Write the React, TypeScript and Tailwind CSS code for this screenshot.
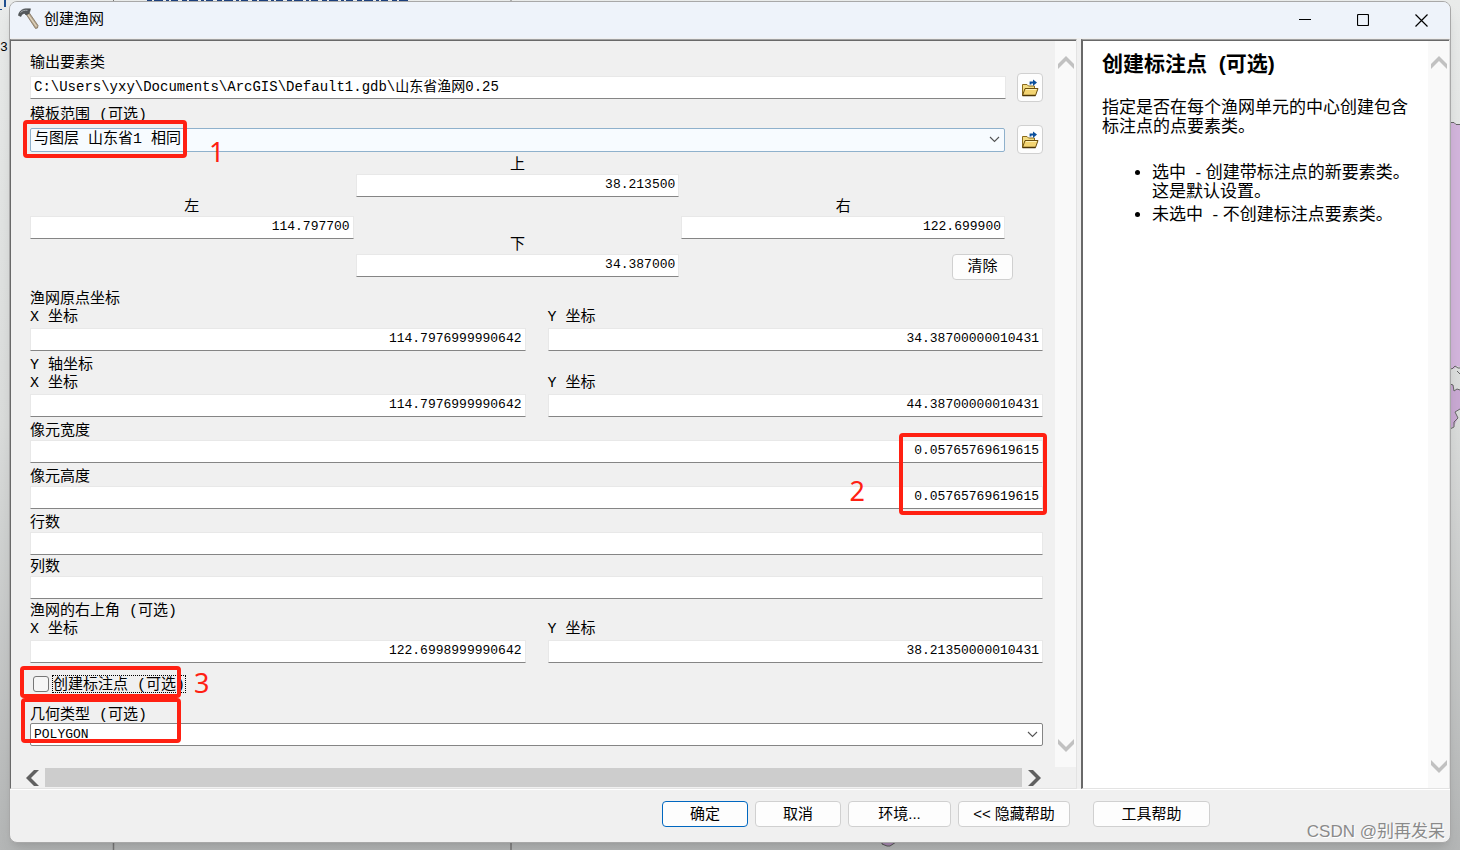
import { useState } from "react";

const mono = "font-['Liberation_Mono','Noto_Sans_CJK_SC',monospace]";

const fieldBase =
  "block h-[23px] w-full min-w-0 border border-[#e8e8e8] border-b-[#858585] bg-white px-[3px] text-black outline-none";

const numberText = "pb-[2px] text-right text-[13px] leading-[18px]";

const labelBase = "block pt-1 leading-[14px]";

function NumberField({ id, label, value = "", gap = "mt-px" }: { id: string; label: string; value?: string; gap?: string }) {
  return (
    <div>
      <label htmlFor={id} className={labelBase}>{label}</label>
      <input id={id} defaultValue={value} className={`${fieldBase} ${gap} ${numberText}`} />
    </div>
  );
}

function ExtentField({ id, label, value }: { id: string; label: string; value: string }) {
  return (
    <div>
      <label htmlFor={id} className={`${labelBase} text-center`}>{label}</label>
      <input id={id} defaultValue={value} className={`${fieldBase} ${numberText} mt-px`} />
    </div>
  );
}

function PointFields({ id, title, x, y }: { id: string; title: string; x: string; y: string }) {
  return (
    <fieldset>
      <legend className={labelBase}>{title}</legend>
      <div className="grid grid-cols-2 gap-[22px]">
        <NumberField id={`${id}-x`} label="X 坐标" value={x} gap="mt-[3px]" />
        <NumberField id={`${id}-y`} label="Y 坐标" value={y} gap="mt-[3px]" />
      </div>
    </fieldset>
  );
}

function FolderButton({ label }: { label: string }) {
  return (
    <button aria-label={label} className="flex h-[29px] w-[26px] shrink-0 items-center justify-center rounded border border-[#d0d0d0] bg-[#fdfdfd]">
      <svg width="18" height="18" viewBox="0 0 18 18">
        <path d="M1.5 16V5.5h4.500l1.500 1.500h6V10" fill="#f3dc83" stroke="#8a6a1c" />
        <path d="M1.500 16.500L4 9.500h13l-2.500 7z" fill="#f3d472" stroke="#6b4d0c" strokeLinejoin="round" />
        <path d="M5 10.500h10.500" fill="none" stroke="#fdf0b5" />
        <path d="M1.500 16.500h13" stroke="#4d3505" strokeWidth="1.300" />
        <path d="M9.500 5.500V3.500H13" fill="none" stroke="#0b4f9c" strokeWidth="1.800" />
        <path d="M12 0.500l4 3-4 3.500z" fill="#0b4f9c" />
      </svg>
    </button>
  );
}

function Chevron() {
  return (
    <svg className="pointer-events-none absolute right-[5px] top-[8px]" width="11" height="7" viewBox="0 0 11 7">
      <path d="M1 1l4.500 4.500L10 1" fill="none" stroke="#555" strokeWidth="1.100" />
    </svg>
  );
}

function Arrow({ dir, color }: { dir: "up" | "down" | "left" | "right"; color: string }) {
  const points = {
    up: "0,13 8,5 16,13 16,8 8,0 0,8",
    down: "0,0 8,8 16,0 16,5 8,13 0,5",
    left: "13,0 5,8 13,16 8,16 0,8 8,0",
    right: "0,0 8,8 0,16 5,16 13,8 5,0",
  };
  const flat = dir === "up" || dir === "down";
  return (
    <svg width={flat ? 16 : 13} height={flat ? 13 : 16}>
      <polygon points={points[dir]} fill={color} />
    </svg>
  );
}

function ScrollBar() {
  return (
    <div className="flex w-[21px] shrink-0 flex-col items-center justify-between bg-[#f9f9f9] py-[15px]">
      <button aria-label="向上滚动"><Arrow dir="up" color="#c1c1c1" /></button>
      <button aria-label="向下滚动"><Arrow dir="down" color="#c1c1c1" /></button>
    </div>
  );
}

// Red marker frame and its step number
function Marker({ className }: { className: string }) {
  return <div className={`pointer-events-none absolute z-10 rounded border-4 border-[#ff2012] ${className}`} />;
}

function Step({ n, className }: { n: number; className: string }) {
  return (
    <span className={`pointer-events-none absolute z-10 font-['Noto_Sans',sans-serif] text-[27px] leading-7 text-[#ff2012] ${className}`}>
      {n}
    </span>
  );
}

function Backdrop() {
  return (
    <div className="absolute inset-0 overflow-hidden bg-gradient-to-b from-[#e9ebea] via-[#dadcdb] to-[#b4b6b6]">
      <span className={`absolute left-0 top-10 text-[13px] leading-4 text-black ${mono}`}>3</span>
      <svg className="absolute left-0 top-0" width="520" height="10">
        <path d="M5 0v7M0 10h2" stroke="#1f4f8f" strokeWidth="2" />
        <path d="M113.500 0v3M511 0v3" stroke="#777" />
        <path d="M147 0.500h262" stroke="#1c3f7c" strokeWidth="1" strokeDasharray="5 2 9 3 3 2 7 4" />
        <path d="M149 1.500h260" stroke="#8192b3" strokeWidth="1" strokeDasharray="2 4 6 3 1 5" />
      </svg>
      <svg className="absolute right-0 top-[120px]" width="10" height="320">
        <path d="M0 2.500h4l2 2h4V247l-3-1-3 3-4-1z" fill="#d3b5dc" />
        <path d="M0 264l3 1 1 6 3-2 3 1v19l-5 3 3 6-4 8-4 3z" fill="#c9a9d3" />
        <path d="M0 2.500h4l2 2h4M0 248l2 1 3-3 3 2 2 0M7 251l3 3M0 264l3 1 1 6 3-2 3 1M10 289l-5 3 3 6-4 4 0 5-4 2" fill="none" stroke="#666" />
      </svg>
      <svg className="absolute bottom-0 left-0" width="900" height="9">
        <path d="M113.500 0v9M511 0v9" stroke="#777" strokeWidth="1.500" />
        <path d="M882 0v3l5 2h3l6-4V0z" fill="#a98bb2" stroke="#555" />
      </svg>
    </div>
  );
}

function TitleBar() {
  return (
    <header className="flex h-9 shrink-0 items-center bg-[#eef3fa] pl-2">
      <svg className="mb-1" width="21" height="21" viewBox="0 0 21 21">
        <path d="M8 6l3-1.500 9 13-0.500 2.500-2 0.500z" fill="#b5a58c" stroke="#7d705c" strokeWidth="0.800" />
        <path d="M10 6.500l8.500 12" stroke="#e3d8c2" strokeWidth="1.200" />
        <path d="M0.500 7.500C0.500 4.500 3.500 1 7.500 0.800h5l-0.500 2.200-1 2.500-3 1.500-1.500-1.500C4.800 5.500 3.500 6.500 3 8.500z" fill="#55595c" stroke="#3c4043" strokeWidth="0.500" />
        <path d="M2.500 4.500c2-2 4-2.500 7-2.200" fill="none" stroke="#a7adb2" />
      </svg>
      <h1 className="ml-[5px] flex-1 pt-px text-[15px] leading-5">创建渔网</h1>
      <button aria-label="最小化" className="flex h-full w-[58px] items-center justify-center">
        <svg width="12" height="12"><path d="M0 5.500h12" stroke="#000" /></svg>
      </button>
      <button aria-label="最大化" className="flex h-full w-[58px] items-center justify-center">
        <svg width="12" height="12"><rect x="0.500" y="0.500" width="11" height="11" rx="1" fill="none" stroke="#000" strokeWidth="1.200" /></svg>
      </button>
      <button aria-label="关闭" className="flex h-full w-[58px] items-center justify-center">
        <svg width="13" height="13"><path d="M0.500 0.500l12 12M12.500 0.500l-12 12" stroke="#000" strokeWidth="1.200" /></svg>
      </button>
    </header>
  );
}

function FormPanel() {
  const [labels, setLabels] = useState(false);

  return (
    <main className="flex min-w-0 flex-1 flex-col border border-[#e3e3e3] border-l-[#696969] border-t-[#a0a0a0] shadow-[inset_0_1px_0_#696969]">
      <div className="flex flex-1 pt-px">
        <form className="min-w-0 flex-1 pb-4 pl-[19px] pr-3 pt-3 text-[15px]" onSubmit={(e) => e.preventDefault()}>
          {/* Output */}
          <label htmlFor="output" className={labelBase}>输出要素类</label>
          <div className="mt-[2px] flex items-center gap-[11px]">
            <input
              id="output"
              defaultValue="C:\Users\yxy\Documents\ArcGIS\Default1.gdb\山东省渔网0.25"
              className={`${fieldBase} pb-[6px] text-[14px] leading-4`}
            />
            <FolderButton label="浏览输出要素类" />
          </div>

          {/* Template extent */}
          <label htmlFor="extent" className={`${labelBase} mt-[3px]`}>模板范围 (可选)</label>
          <div className="mt-[2px] flex items-center gap-3">
            <div className="relative min-w-0 flex-1">
              <select id="extent" className="block h-6 w-full appearance-none rounded-xs border border-[#8fb1cc] bg-[#f7fbff] px-[3px] text-[15px] leading-5 outline-none">
                <option>与图层 山东省1 相同</option>
              </select>
              <Chevron />
              <Marker className="-left-[7px] -top-2 h-[38px] w-[164px]" />
              <Step n={1} className="left-[179px] top-[10px]" />
            </div>
            <FolderButton label="浏览模板范围" />
          </div>

          <div className="mr-[38px] mt-px grid grid-cols-3 gap-[2px]">
            <div className="pt-[42px]">
              <ExtentField id="left" label="左" value="114.797700" />
            </div>
            <div className="flex flex-col gap-[38px]">
              <ExtentField id="top" label="上" value="38.213500" />
              <ExtentField id="bottom" label="下" value="34.387000" />
            </div>
            <div className="flex flex-col pt-[42px]">
              <ExtentField id="right" label="右" value="122.699900" />
              <button className="-mr-2 mt-[15px] h-[26px] w-[61px] self-end rounded border border-[#d0d0d0] bg-[#fdfdfd] pt-[2px] text-[15px] leading-5">
                清除
              </button>
            </div>
          </div>

          <div className="mt-[9px] space-y-1">
            <PointFields id="origin" title="渔网原点坐标" x="114.7976999990642" y="34.38700000010431" />
            <PointFields id="axis" title="Y 轴坐标" x="114.7976999990642" y="44.38700000010431" />
            <div className="relative space-y-1">
              <NumberField id="cell-width" label="像元宽度" value="0.05765769619615" />
              <NumberField id="cell-height" label="像元高度" value="0.05765769619615" />
              <Marker className="-right-1 top-3 h-[82px] w-[148px]" />
              <Step n={2} className="right-[178px] top-14" />
            </div>
          </div>
          <div className="mt-1 space-y-[2px]">
            <NumberField id="rows" label="行数" />
            <NumberField id="cols" label="列数" />
            <PointFields id="corner" title="渔网的右上角 (可选)" x="122.6998999990642" y="38.21350000010431" />
          </div>

          <div className="relative mt-3 flex h-[18px] items-center pl-[3px]">
            <input
              id="labels"
              type="checkbox"
              checked={labels}
              onChange={(e) => setLabels(e.target.checked)}
              className="h-4 w-4 appearance-none rounded-[3px] border border-[#767676] bg-[#f6f6f6] checked:bg-[#0067c0]"
            />
            <label htmlFor="labels" className="ml-[3px] h-[18px] border border-dotted border-black pt-1 leading-3">创建标注点 (可选)</label>
            <Marker className="-left-[10px] -top-[9px] h-8 w-[161px]" />
            <Step n={3} className="left-[164px] -top-[6px]" />
          </div>

          <div className="relative mt-3">
            <label htmlFor="geometry" className={labelBase}>几何类型 (可选)</label>
            <div className="relative">
              <select id="geometry" className="block h-[23px] w-full appearance-none rounded-xs border border-[#858585] bg-white px-[3px] text-[13px] leading-5 outline-none">
                <option>POLYGON</option>
                <option>POLYLINE</option>
              </select>
              <Chevron />
            </div>
            <Marker className="-left-[9px] -top-[7px] h-[45px] w-[160px]" />
          </div>
        </form>
        <ScrollBar />
      </div>

      {/* Horizontal scroll */}
      <div className="mr-[35px] flex h-[21px] shrink-0 items-center gap-[6px] pl-[15px]">
        <button aria-label="向左滚动"><Arrow dir="left" color="#606060" /></button>
        <div className="h-[19px] flex-1 bg-[#cdcdcd]" />
        <button aria-label="向右滚动"><Arrow dir="right" color="#606060" /></button>
      </div>
    </main>
  );
}

function HelpPanel() {
  return (
    <aside className="flex w-[369px] shrink-0 border border-l-2 border-[#e3e3e3] border-l-[#696969] border-t-[#a0a0a0] bg-white pt-px font-['Liberation_Sans','Noto_Sans_CJK_SC',sans-serif] shadow-[inset_0_1px_0_#696969]">
      <div className="flex-1 pl-[19px] pt-3 text-[17px] leading-[19px]">
        <h2 className="pt-px text-[21px] font-bold leading-5">创建标注点&nbsp; (可选)</h2>
        <p className="mt-6 pr-4">指定是否在每个渔网单元的中心创建包含标注点的点要素类。</p>
        <ul className="mt-[27px] list-disc space-y-1 pl-[50px]">
          <li>
            选中&nbsp; - 创建带标注点的新要素类。
            <br />
            这是默认设置。
          </li>
          <li>未选中&nbsp; - 不创建标注点要素类。</li>
        </ul>
      </div>
      <ScrollBar />
    </aside>
  );
}

const footerButton = "h-[26px] rounded border bg-[#fdfdfd] text-[15px] leading-5";

export default function App() {
  return (
    <div className={`relative flex min-h-screen pb-[7px] pl-[9px] pr-[9px] pt-px text-black ${mono}`}>
      <Backdrop />

      <div className="relative flex flex-1 flex-col overflow-hidden rounded-lg border border-[#a8a8a8] bg-[#f0f0f0] shadow-lg">
        <TitleBar />

        <div className="mt-px flex flex-1 gap-1">
          <FormPanel />
          <HelpPanel />
        </div>

        {/* Footer */}
        <footer className="relative flex h-[53px] shrink-0 items-start justify-end gap-[7px] border-t border-white pr-60 pt-[11px] font-['Liberation_Sans','Noto_Sans_CJK_SC',sans-serif]">
          <button className={`${footerButton} w-[86px] border-[#0067c0]`}>确定</button>
          <button className={`${footerButton} w-[86px] border-[#d0d0d0]`}>取消</button>
          <button className={`${footerButton} w-[103px] border-[#d0d0d0]`}>环境...</button>
          <button className={`${footerButton} w-28 border-[#d0d0d0]`}>&lt;&lt; 隐藏帮助</button>
          <button className={`${footerButton} ml-4 w-[117px] border-[#d0d0d0]`}>工具帮助</button>
          <span className="absolute bottom-0 right-[5px] text-[17px] leading-5 text-[#8a8a8a] [text-shadow:1px_1px_0_#fff]">
            CSDN @别再发呆
          </span>
        </footer>
      </div>
    </div>
  );
}
